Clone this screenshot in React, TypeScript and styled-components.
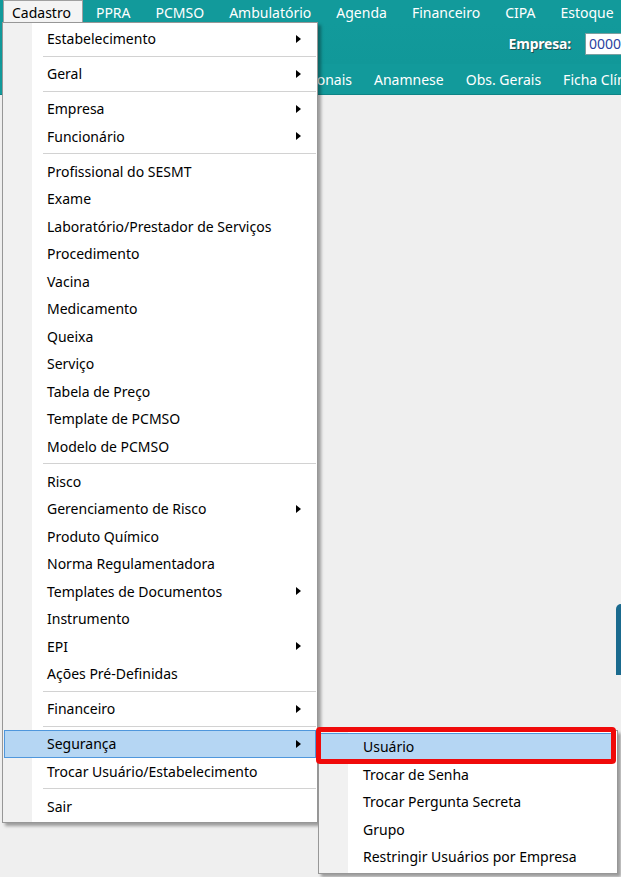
import React from "react";
import styled, { createGlobalStyle } from "styled-components";

const Global = createGlobalStyle`
  html, body { margin: 0; padding: 0; }
  body {
    background: #efefef;
    font-family: "Noto Sans", "Open Sans", sans-serif;
    font-size: 14px;
    color: #000;
  }
`;

const TEAL = "#129a9b";

const Window = styled.div`
  position: relative;
  width: 621px;
  height: 877px;
  overflow: hidden;
  background: #efefef;
`;

const MenuBar = styled.div`
  display: flex;
  align-items: stretch;
  height: 23px;
  padding-left: 3px;
  background: ${TEAL};
`;

const TopItem = styled.div<{ $active?: boolean }>`
  display: flex;
  align-items: center;
  padding: 0 11px 0 ${(p) => (p.$active ? 8 : 10)}px;
  color: ${(p) => (p.$active ? "#000" : "#fff")};
  background: ${(p) => (p.$active ? "#f4f4f4" : "transparent")};
  border: 1px solid ${(p) => (p.$active ? "#a0a0a0" : "transparent")};
  border-bottom: none;
  white-space: nowrap;
  font-size: 14px;
  margin-right: 2px;
`;

const ToolBar = styled.div`
  display: flex;
  align-items: center;
  justify-content: flex-end;
  height: 41px;
  background: linear-gradient(${TEAL}, #119899);
  gap: 14px;
`;

const Label = styled.span`
  color: #fff;
  font-weight: bold;
  font-size: 14px;
  letter-spacing: -0.2px;
  text-shadow: 1px 1px 0 #1c4f50, 0 0 1px #2b5e5f;
`;

const CodeInput = styled.div`
  width: 36px;
  height: 22px;
  box-sizing: border-box;
  background: #fff;
  border: 1px solid #7a9fa0;
  border-right: none;
  color: #2a3fa0;
  padding-left: 3px;
  display: flex;
  align-items: center;
  font-size: 14px;
  overflow: hidden;
`;

const TabStrip = styled.div`
  display: flex;
  align-items: center;
  height: 30px;
  background: ${TEAL};
  border-bottom: 1px solid #0d8486;
  overflow: hidden;
  white-space: nowrap;
`;

const Tab = styled.div<{ $w?: number }>`
  color: #fff;
  font-size: 14px;
  flex: none;
  width: ${(p) => (p.$w ? `${p.$w}px` : "auto")};
  text-align: ${(p) => (p.$w ? "right" : "left")};
  margin-right: 22px;
`;

const Content = styled.div`
  display: flex;
  justify-content: flex-end;
  padding-top: 509px;
`;

const CardEdge = styled.div`
  width: 5px;
  height: 71px;
  background: #1a6a8e;
  border-top-left-radius: 5px;
`;

const Menu = styled.div<{ $left: number; $top: number; $width: number }>`
  position: absolute;
  left: ${(p) => p.$left}px;
  top: ${(p) => p.$top}px;
  width: ${(p) => p.$width}px;
  box-sizing: border-box;
  padding: 2px 1px;
  border: 1px solid #979797;
  background: linear-gradient(to right, #f1f1f1 0, #f1f1f1 29px, #fff 29px);
  box-shadow: 3px 3px 3px rgba(0, 0, 0, 0.35);
  z-index: 2;
`;

const Item = styled.div<{ $hot?: boolean; $indent?: number }>`
  position: relative;
  height: 27.5px;
  box-sizing: border-box;
  display: flex;
  align-items: center;
  padding-left: ${(p) => p.$indent ?? 42}px;
  padding-right: 12px;
  white-space: nowrap;
  font-size: 14px;
  background: ${(p) => (p.$hot ? "#b5d6f3" : "transparent")};
  border: 1px solid ${(p) => (p.$hot ? "#4f97dc" : "transparent")};
`;

const ItemText = styled.span`
  flex: 1;
`;

const Arrow = styled.span`
  width: 0;
  height: 0;
  border-top: 4px solid transparent;
  border-bottom: 4px solid transparent;
  border-left: 5px solid #000;
  margin-right: 2px;
`;

const Separator = styled.div`
  height: 7.5px;
  display: flex;
  align-items: center;
  padding-left: 39px;
  &::after {
    content: "";
    flex: 1;
    height: 1px;
    background: #d2d2d2;
  }
`;

const Callout = styled.div`
  position: absolute;
  left: 316px;
  top: 727px;
  width: 300px;
  height: 37px;
  box-sizing: border-box;
  border: 5px solid #f00a0a;
  border-radius: 4px;
  z-index: 3;
  pointer-events: none;
`;

type Entry = { label: string; sub?: boolean; hot?: boolean } | "sep";

const main: Entry[] = [
  { label: "Estabelecimento", sub: true },
  "sep",
  { label: "Geral", sub: true },
  "sep",
  { label: "Empresa", sub: true },
  { label: "Funcionário", sub: true },
  "sep",
  { label: "Profissional do SESMT" },
  { label: "Exame" },
  { label: "Laboratório/Prestador de Serviços" },
  { label: "Procedimento" },
  { label: "Vacina" },
  { label: "Medicamento" },
  { label: "Queixa" },
  { label: "Serviço" },
  { label: "Tabela de Preço" },
  { label: "Template de PCMSO" },
  { label: "Modelo de PCMSO" },
  "sep",
  { label: "Risco" },
  { label: "Gerenciamento de Risco", sub: true },
  { label: "Produto Químico" },
  { label: "Norma Regulamentadora" },
  { label: "Templates de Documentos", sub: true },
  { label: "Instrumento" },
  { label: "EPI", sub: true },
  { label: "Ações Pré-Definidas" },
  "sep",
  { label: "Financeiro", sub: true },
  "sep",
  { label: "Segurança", sub: true, hot: true },
  { label: "Trocar Usuário/Estabelecimento" },
  "sep",
  { label: "Sair" },
];

const security: Entry[] = [
  { label: "Usuário", hot: true },
  { label: "Trocar de Senha" },
  { label: "Trocar Pergunta Secreta" },
  { label: "Grupo" },
  { label: "Restringir Usuários por Empresa" },
];

function renderEntries(list: Entry[], indent?: number) {
  return list.map((e, i) =>
    e === "sep" ? (
      <Separator key={i} />
    ) : (
      <Item key={i} $hot={e.hot} $indent={indent}>
        <ItemText>{e.label}</ItemText>
        {e.sub && <Arrow />}
      </Item>
    )
  );
}

export default function App() {
  return (
    <Window>
      <Global />
      <MenuBar>
        <TopItem $active>Cadastro</TopItem>
        <TopItem>PPRA</TopItem>
        <TopItem>PCMSO</TopItem>
        <TopItem>Ambulatório</TopItem>
        <TopItem>Agenda</TopItem>
        <TopItem>Financeiro</TopItem>
        <TopItem>CIPA</TopItem>
        <TopItem>Estoque</TopItem>
      </MenuBar>
      <ToolBar>
        <Label>Empresa:</Label>
        <CodeInput>00000</CodeInput>
      </ToolBar>
      <TabStrip>
        <Tab $w={352}>Dados Ocupacionais</Tab>
        <Tab>Anamnese</Tab>
        <Tab>Obs. Gerais</Tab>
        <Tab>Ficha Clínica</Tab>
      </TabStrip>
      <Content>
        <CardEdge />
      </Content>

      <Menu $left={2} $top={22} $width={316}>
        {renderEntries(main)}
      </Menu>
      <Menu $left={318} $top={730} $width={300}>
        {renderEntries(security, 42)}
      </Menu>
      <Callout />
    </Window>
  );
}
